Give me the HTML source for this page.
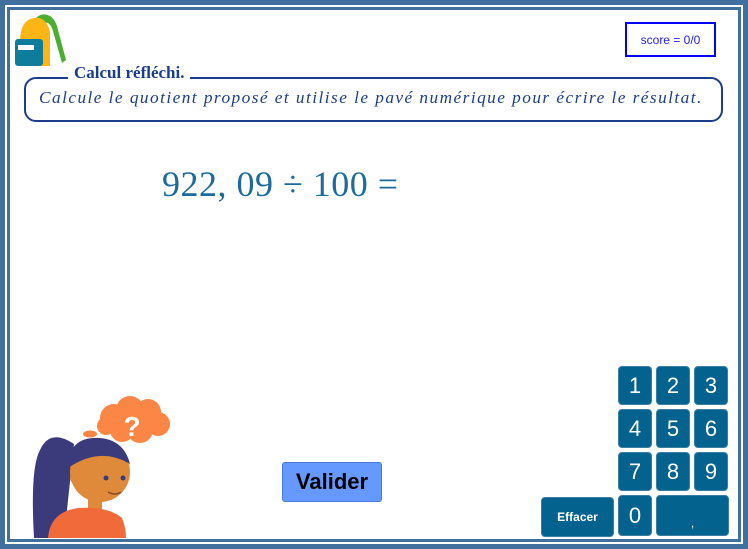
<!DOCTYPE html>
<html><head><meta charset="utf-8"><style>
*{margin:0;padding:0;box-sizing:border-box}
body{width:748px;height:549px;background:#fff;position:relative;overflow:hidden;font-family:"Liberation Sans",sans-serif}
.fr{position:absolute;border-style:solid;border-color:#41709f}
.k{position:absolute;background:#04628f;border:1px solid #3a7fa3;border-radius:4px;color:#fff;font-size:22px;display:flex;align-items:center;justify-content:center}
</style></head><body>
<div class="fr" style="left:0;top:0;width:748px;height:549px;border-width:5px"></div>
<div class="fr" style="left:7px;top:7px;width:734px;height:535px;border-width:2px"></div>
<div class="fr" style="left:9px;top:9px;width:730px;height:531px;border-width:1px"></div>

<svg style="position:absolute;left:14px;top:12px" width="52" height="56" viewBox="0 0 52 56">
<path d="M22 6 q6 -6 14 -2 q6 4 8 14 l8 30 l-4 3 l-9 -32 q-3 -10 -9 -8 l-6 2z" fill="#4aae2e"/>
<path d="M6 30 q0 -22 14 -24 q12 -2 16 14 l0 34 l-28 0z" fill="#fdb515"/>
<rect x="1" y="27" width="28" height="27" rx="3" fill="#0e7d9c"/>
<rect x="4" y="33" width="16" height="5" fill="#fff"/>
</svg>

<div style="position:absolute;left:625px;top:22px;width:91px;height:35px;border:2px solid #0000ff;color:#2222ee;font-size:12px;display:flex;align-items:center;justify-content:center">score = 0/0</div>

<div style="position:absolute;left:24px;top:77px;width:699px;height:45px;border:2px solid #1a3e8c;border-radius:12px"></div>
<div style="position:absolute;left:68px;top:63px;padding:0 6px;background:#fff;font-family:'Liberation Serif',serif;font-weight:bold;font-size:17px;color:#1a3e8c">Calcul réfléchi.</div>
<div style="position:absolute;left:39px;top:88px;font-family:'Liberation Serif',serif;font-style:italic;font-size:17.3px;letter-spacing:1.45px;color:#1a3e8c;white-space:nowrap">Calcule le quotient proposé et utilise le pavé numérique pour écrire le résultat.</div>

<div style="position:absolute;left:162px;top:163px;font-family:'Liberation Serif',serif;font-size:36px;letter-spacing:0.5px;color:#1c6b9c;white-space:nowrap">922, 09 ÷ 100 =</div>

<svg style="position:absolute;left:30px;top:392px" width="145" height="146" viewBox="0 0 145 146">
<g fill="#fb8646">
<circle cx="84" cy="26" r="14"/><circle cx="100" cy="18" r="14"/><circle cx="118" cy="20" r="13"/><circle cx="128" cy="32" r="12"/><circle cx="110" cy="38" r="13"/><circle cx="92" cy="38" r="12"/><circle cx="76" cy="34" r="9"/>
<circle cx="77" cy="62" r="4"/><circle cx="76" cy="74" r="3"/>
</g>
<text x="102" y="44" font-family="Liberation Sans" font-weight="bold" font-size="28" fill="#fff" text-anchor="middle">?</text>
<path d="M4 146 q-4 -70 6 -88 q10 -22 34 -6 l-10 94z" fill="#3b3a7a"/>
<ellipse cx="60" cy="42" rx="7" ry="3.5" fill="#fb8646"/>
<rect x="58" y="100" width="14" height="20" fill="#de8a3a"/>
<path d="M18 146 q2 -26 30 -30 q30 -2 44 10 q4 10 4 20z" fill="#f06a3a"/>
<circle cx="70" cy="80" r="30" fill="#de8a3a"/>
<path d="M38 76 q0 -32 32 -30 q24 2 30 26 q-30 -18 -62 4z" fill="#3b3a7a"/>
<circle cx="46" cy="86" r="6" fill="#de8a3a"/>
<circle cx="76" cy="86" r="2.5" fill="#3b3a7a"/><circle cx="93" cy="86" r="2.5" fill="#3b3a7a"/>
<path d="M78 100 q7 4 13 0" stroke="#8a4a20" stroke-width="1.5" fill="none"/>
</svg>

<div style="position:absolute;left:282px;top:462px;width:100px;height:40px;background:#6699ff;border:1px solid #4a78d8;border-radius:3px;font-weight:bold;font-size:22px;color:#000;display:flex;align-items:center;justify-content:center">Valider</div>

<div class="k" style="left:618px;top:366px;width:34px;height:39px">1</div>
<div class="k" style="left:656px;top:366px;width:34px;height:39px">2</div>
<div class="k" style="left:694px;top:366px;width:34px;height:39px">3</div>
<div class="k" style="left:618px;top:409px;width:34px;height:39px">4</div>
<div class="k" style="left:656px;top:409px;width:34px;height:39px">5</div>
<div class="k" style="left:694px;top:409px;width:34px;height:39px">6</div>
<div class="k" style="left:618px;top:452px;width:34px;height:39px">7</div>
<div class="k" style="left:656px;top:452px;width:34px;height:39px">8</div>
<div class="k" style="left:694px;top:452px;width:34px;height:39px">9</div>
<div class="k" style="left:618px;top:495px;width:34px;height:41px">0</div>
<div class="k" style="left:656px;top:495px;width:73px;height:41px;font-size:12px;padding-top:14px">,</div>
<div class="k" style="left:541px;top:497px;width:73px;height:40px;font-size:12px;font-weight:bold">Effacer</div>
</body></html>
